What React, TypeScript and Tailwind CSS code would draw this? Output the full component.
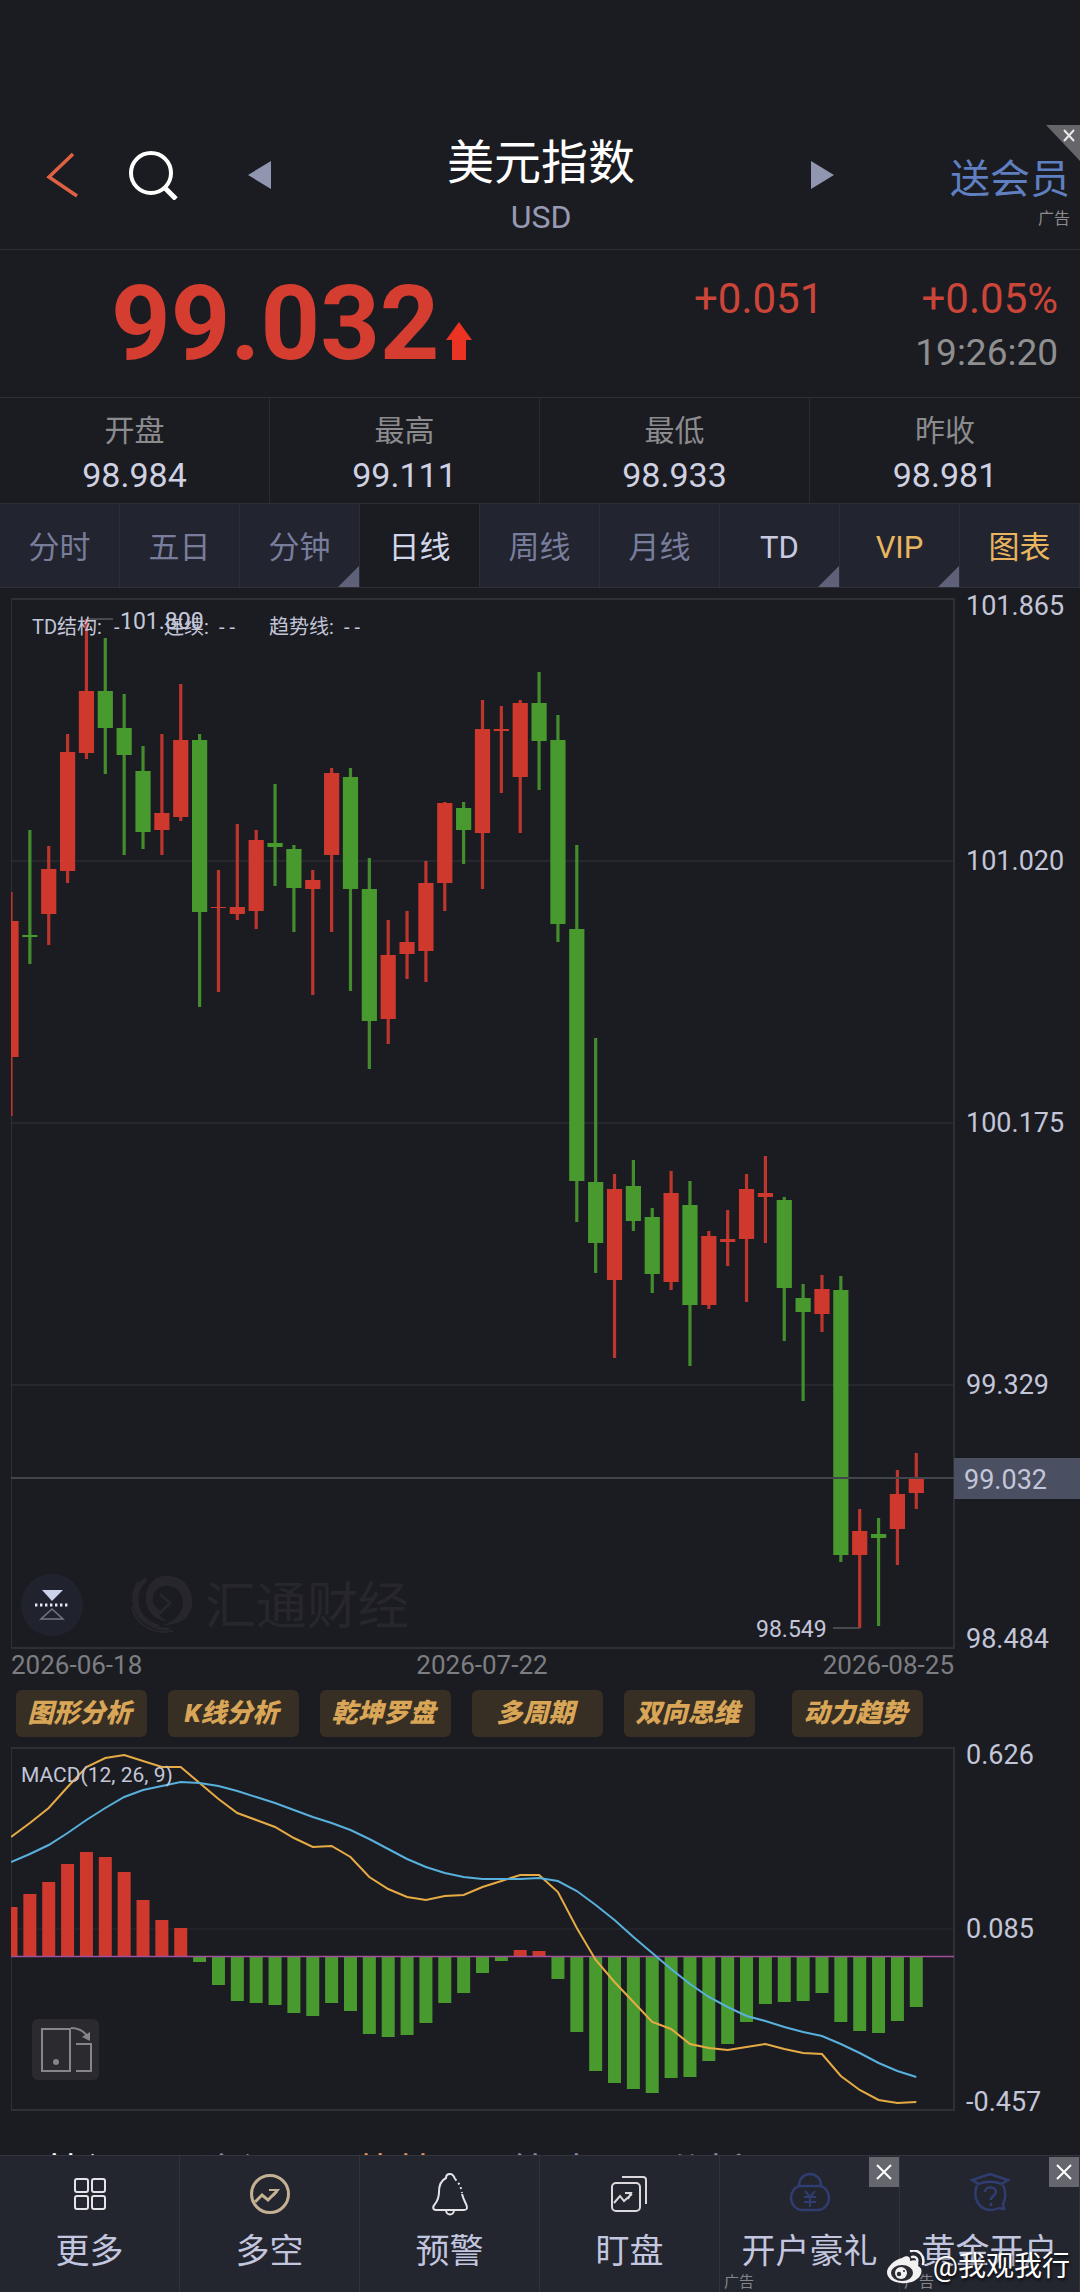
import React, { useState } from 'react';

type Candle = {
    up: boolean;
    high: number;
    top: number;
    bottom: number;
    low: number;
}

const RED = '#cf382d';
const GREEN = '#489a2f';
const STEP = 18.86;

// r = up, g = down, then high / body top / body bottom / low inside the plot
const rawCandles: [string, number, number, number, number][] = [
    ['r', 293, 322, 458, 517],
    ['g', 231, 336, 338, 365],
    ['r', 247, 270, 315, 346],
    ['r', 135, 153, 272, 284],
    ['r', 20, 92, 154, 160],
    ['g', 39, 92, 129, 175],
    ['g', 95, 129, 156, 256],
    ['g', 147, 172, 233, 250],
    ['r', 135, 214, 231, 256],
    ['r', 85, 141, 218, 222],
    ['g', 135, 141, 313, 408],
    ['r', 271, 308, 309, 393],
    ['r', 225, 308, 315, 321],
    ['r', 231, 241, 312, 330],
    ['g', 185, 244, 248, 287],
    ['g', 246, 250, 289, 333],
    ['r', 271, 281, 290, 396],
    ['r', 169, 174, 256, 333],
    ['g', 169, 178, 290, 392],
    ['g', 259, 290, 422, 470],
    ['r', 321, 356, 420, 445],
    ['r', 312, 343, 355, 380],
    ['r', 262, 284, 352, 383],
    ['r', 203, 204, 284, 312],
    ['g', 203, 209, 231, 265],
    ['r', 101, 130, 234, 290],
    ['r', 107, 130, 132, 194],
    ['r', 101, 104, 178, 234],
    ['g', 73, 104, 142, 191],
    ['g', 116, 141, 325, 343],
    ['g', 246, 330, 582, 623],
    ['g', 439, 583, 644, 674],
    ['r', 575, 590, 681, 759],
    ['g', 561, 587, 622, 632],
    ['g', 609, 618, 675, 694],
    ['r', 572, 594, 683, 691],
    ['g', 582, 606, 706, 767],
    ['r', 632, 637, 706, 710],
    ['r', 611, 640, 643, 667],
    ['r', 575, 590, 640, 703],
    ['r', 557, 594, 598, 644],
    ['g', 598, 601, 689, 742],
    ['g', 685, 699, 713, 802],
    ['r', 676, 690, 715, 733],
    ['g', 677, 691, 956, 963],
    ['r', 910, 932, 956, 1029],
    ['g', 919, 935, 939, 1027],
    ['r', 871, 895, 930, 966],
    ['r', 854, 879, 894, 910],
];

const candles: Candle[] = rawCandles.map(([c, high, top, bottom, low]) => ({ up: c === 'r', high, top, bottom, low }));

const ZERO = 209;
const bars = [
    159, 146, 134, 116, 104, 109, 124, 152, 172, 180, 214, 237, 253, 255, 257, 265, 268, 255, 263, 286, 289, 287, 275, 255, 245,
    225, 213, 202, 203, 231, 284, 323, 335, 341, 345, 330, 329, 313, 296, 274, 256, 254, 253, 245, 274, 283, 285, 273, 259,
];
const dif = [
    89, 75, 60, 39, 19, 10, 7, 13, 19, 19, 35, 51, 65, 72, 79, 90, 99, 98, 109, 129, 141, 149, 152, 148, 147,
    139, 133, 127, 127, 144, 180, 212, 234, 254, 274, 281, 296, 300, 302, 299, 296, 301, 305, 306, 328, 342, 352, 355, 354,
];
const dea = [
    114, 106, 97, 85, 72, 60, 49, 42, 38, 34, 35, 38, 43, 49, 55, 62, 69, 75, 82, 91, 101, 111, 119, 125, 129,
    131, 131, 131, 130, 133, 143, 157, 172, 189, 205, 221, 236, 249, 259, 268, 273, 279, 284, 288, 296, 305, 315, 323, 329,
];

const toPoints = (values: number[]) => values.map((v, i) => `${(i * STEP).toFixed(1)},${v}`).join(' ');

const stats = [
    { nome: '开盘', valor: '98.984' },
    { nome: '最高', valor: '99.111' },
    { nome: '最低', valor: '98.933' },
    { nome: '昨收', valor: '98.981' },
];

const periods = [
    { nome: '分时', color: 'text-[#787d9c]', menu: false },
    { nome: '五日', color: 'text-[#787d9c]', menu: false },
    { nome: '分钟', color: 'text-[#787d9c]', menu: true },
    { nome: '日线', color: 'text-[#787d9c]', menu: false },
    { nome: '周线', color: 'text-[#787d9c]', menu: false },
    { nome: '月线', color: 'text-[#787d9c]', menu: false },
    { nome: 'TD', color: 'text-[#c8cbe0]', menu: true },
    { nome: 'VIP', color: 'text-[#e9b55f]', menu: true },
    { nome: '图表', color: 'text-[#e9b55f]', menu: false },
];

const tools = ['图形分析', 'K线分析', '乾坤罗盘', '多周期', '双向思维', '动力趋势'];

function Header() {
    return (
        <header className="grid grid-cols-[1fr_588px_1fr] items-start border-b border-[#2f3036] pt-[135px] h-[250px]">
            <div className="flex items-center h-20 pl-[46px]">
                <button aria-label="返回">
                    <svg width="32" height="46" viewBox="0 0 32 46" fill="none" stroke="#df6144" strokeWidth="3.5">
                        <path d="M27 2 3 25 31 44" />
                    </svg>
                </button>
                <button aria-label="搜索" className="ml-[51px]">
                    <svg width="50" height="50" viewBox="0 0 50 50" fill="none" stroke="#fff" strokeWidth="4">
                        <circle cx="22" cy="23" r="20" />
                        <path d="M35 37 47 49" strokeWidth="5" />
                    </svg>
                </button>
            </div>
            <div className="flex items-start justify-between">
                <button aria-label="上一个" className="flex items-center h-20 pl-0.5">
                    <svg width="23" height="28" viewBox="0 0 23 28" fill="#9196b0"><path d="M23 0v28L0 14z" /></svg>
                </button>
                <div className="text-center">
                    <h1 className="text-[47px] leading-[56px] text-white">美元指数</h1>
                    <p className="mt-1.5 text-[32px] leading-10 text-[#979ab2]">USD</p>
                </div>
                <button aria-label="下一个" className="flex items-center h-20">
                    <svg width="23" height="28" viewBox="0 0 23 28" fill="#9196b0"><path d="M0 0v28l23-14z" /></svg>
                </button>
            </div>
            <div className="relative flex flex-col items-end pr-2.5 pt-[18px]">
                <a href="#vip" className="text-[40px] leading-[54px] whitespace-nowrap text-[#5f7fc0]">送会员</a>
                <span className="text-base leading-6 text-[#8b8b8f]">广告</span>
                <button aria-label="关闭广告" className="absolute right-0 -top-2.5">
                    <svg width="34" height="36" viewBox="0 0 34 36">
                        <path d="M0 0h34v36z" fill="#66666a" />
                        <path d="m18 5 10 11M28 5 18 16" stroke="#e8e8e8" strokeWidth="2" />
                    </svg>
                </button>
            </div>
        </header>
    )
}

function Quote() {
    return (
        <section className="flex items-center justify-between h-[148px] border-b border-[#2f3036] pl-[111px] pr-[22px]">
            <div className="flex items-end">
                <strong className="text-[104px] leading-[112px] font-bold text-[#d63d31]">99.032</strong>
                <svg className="mb-5 ml-1.5" width="26" height="38" viewBox="0 0 26 38" fill="#ea3323">
                    <path d="M13 0 26 18h-6v20H6V18H0z" />
                </svg>
            </div>
            <div className="grid grid-cols-[auto_auto] gap-x-[92px] pt-1 text-right text-[42px] leading-[54px] text-[#cb4538]">
                <span>+0.051</span>
                <span>+0.05%</span>
                <time className="col-start-2 text-[37px] text-[#8f8f90]">19:26:20</time>
            </div>
        </section>
    )
}

function PriceChart() {
    return (
        <section className="relative pl-[11px]">
            <svg className="block w-full" viewBox="0 0 1069 1091" fontFamily='Roboto, "Noto Sans CJK SC", sans-serif'>
                <clipPath id="plot"><rect width="944" height="1049" /></clipPath>
                <g transform="translate(0 11)">
                    {[262, 524, 786].map((y) => (
                        <path key={y} d={`M0 ${y}H943`} stroke="#27282d" strokeWidth="2" />
                    ))}
                    <rect width="943" height="1049" fill="none" stroke="#2f3037" strokeWidth="2" />

                    {/* watermark */}
                    <path
                        fill="#27262c"
                        d="M152 977c20-2 31 13 29 29-2 14-13 20-29 20 12-4 20-12 20-22 0-12-9-18-18-17-10 1-13 9-12 17s8 14 14 18c-10 0-20-8-21-20-1-12 5-23 17-25z"
                    />
                    <g fill="none" stroke="#27262c" strokeLinecap="round">
                        <path d="M134 981c-14 13-12 38 12 46" strokeWidth="4" />
                        <path d="M127 984c-12 20 2 46 30 46" strokeWidth="3" />
                        <path d="M121 1008c4 18 22 28 40 24" strokeWidth="2" />
                        <path d="m150 996 9 8-10 10-9-9" strokeWidth="3" />
                    </g>
                    <text x="194" y="1025" fontSize="51" fill="#27262c">汇通财经</text>

                    <g clipPath="url(#plot)">
                        {candles.map((c, i) => {
                            const x = i * STEP;
                            const color = c.up ? RED : GREEN;
                            return (
                                <g key={i} fill={color}>
                                    <rect x={x - 1.6} y={c.high} width="3.2" height={c.low - c.high} opacity="0.9" />
                                    <rect x={x - 7.6} y={c.top} width="15.2" height={c.bottom - c.top} />
                                </g>
                            )
                        })}
                    </g>
                    <path d="M0 879H943" stroke="#43454d" strokeWidth="2" />

                    <path d="M77 20h25M822 1029h27" stroke="#57585d" strokeWidth="1.5" />
                    <g fill="#c3c6d9" fontSize="20">
                        <text x="21" y="35">TD结构:</text>
                        <text x="103" y="35">- -</text>
                        <text x="153" y="35">连续:</text>
                        <text x="208" y="35">- -</text>
                        <text x="258" y="35">趋势线:</text>
                        <text x="333" y="35">- -</text>
                    </g>
                    <g fill="#c3c6d9" fontSize="23">
                        <text x="109" y="30">101.800</text>
                        <text x="745" y="1038">98.549</text>
                    </g>

                    <rect x="943" y="859" width="126" height="41" fill="#4b4f62" />
                    <g fill="#c3c6d9" fontSize="27">
                        <text x="955" y="16">101.865</text>
                        <text x="955" y="271">101.020</text>
                        <text x="955" y="533">100.175</text>
                        <text x="955" y="795">99.329</text>
                        <text x="953" y="890">99.032</text>
                        <text x="955" y="1049">98.484</text>
                    </g>
                    <g fill="#7d7e82" fontSize="26">
                        <text x="0" y="1075">2026-06-18</text>
                        <text x="471" y="1075" textAnchor="middle">2026-07-22</text>
                        <text x="943" y="1075" textAnchor="end">2026-08-25</text>
                    </g>
                </g>
            </svg>
            <button aria-label="收起" className="absolute left-[21px] bottom-[43px] flex items-center justify-center w-[62px] h-[62px] rounded-full bg-[#20232e]">
                <svg width="36" height="32" viewBox="0 0 36 32" fill="none">
                    <path d="M8 1h21L18 12z" fill="#cdd2ec" />
                    <path d="M1 16h34" stroke="#e6e8f5" strokeWidth="3" strokeDasharray="2.4 2.6" />
                    <path d="M18 20 29 30H7z" stroke="#75777f" strokeWidth="1.5" />
                </svg>
            </button>
        </section>
    )
}

function MacdChart() {
    return (
        <section className="relative pl-[11px] mt-[3px]">
            <svg className="block w-full" viewBox="0 0 1069 374" fontFamily='Roboto, "Noto Sans CJK SC", sans-serif'>
                <clipPath id="macd"><rect width="944" height="362" /></clipPath>
                <g transform="translate(0 8)">
                    <path d="M0 181H943" stroke="#222328" strokeWidth="2" />
                    <rect width="943" height="362" fill="none" stroke="#2f3037" strokeWidth="2" />
                    <g clipPath="url(#macd)">
                        {bars.map((v, i) => (
                            <rect
                                key={i}
                                x={i * STEP - 6.5}
                                y={Math.min(v, ZERO)}
                                width="13"
                                height={Math.abs(v - ZERO)}
                                fill={v < ZERO ? RED : GREEN}
                            />
                        ))}
                    </g>
                    <path d="M0 208.5H943" stroke="#a3509a" strokeWidth="1.5" />
                    <polyline points={toPoints(dif)} fill="none" stroke="#e6ab45" strokeWidth="2" />
                    <polyline points={toPoints(dea)} fill="none" stroke="#58b0dc" strokeWidth="2" />
                    <text x="10" y="34" fontSize="21" fill="#c3c6d9">MACD(12, 26, 9)</text>
                    <g fill="#c3c6d9" fontSize="27">
                        <text x="955" y="16">0.626</text>
                        <text x="955" y="190">0.085</text>
                        <text x="955" y="363">-0.457</text>
                    </g>
                </g>
            </svg>
            <button aria-label="横屏" className="absolute left-8 bottom-[34px] flex items-center justify-center w-[67px] h-[61px] rounded-md bg-[#2b2a2f]">
                <svg width="52" height="48" viewBox="0 0 52 48" fill="none" stroke="#85868b" strokeWidth="2">
                    <rect x="2" y="3" width="28" height="42" />
                    <circle cx="16" cy="36" r="3" fill="#85868b" stroke="none" />
                    <path d="M36 18h15v27H36" />
                    <path d="M31 2c7 0 13 3 17 9" />
                    <path d="m42 11 8-5v9z" fill="#85868b" stroke="none" />
                </svg>
            </button>
        </section>
    )
}

function CloseAd() {
    return (
        <button aria-label="关闭广告" className="absolute top-px right-0 flex items-center justify-center w-[30px] h-[30px] bg-[#66676e]">
            <svg width="16" height="16" viewBox="0 0 16 16" stroke="#fff" strokeWidth="2"><path d="m1 1 14 14M15 1 1 15" /></svg>
        </button>
    )
}

const navItems = [
    {
        nome: '更多',
        ad: false,
        icon: (
            <g stroke="#e4e4e8" strokeWidth="2">
                <rect x="7" y="7" width="13" height="13" rx="2" />
                <rect x="24" y="7" width="13" height="13" rx="2" />
                <rect x="7" y="24" width="13" height="13" rx="2" />
                <rect x="24" y="24" width="13" height="13" rx="2" />
            </g>
        ),
    },
    {
        nome: '多空',
        ad: false,
        icon: (
            <g stroke="#c4b193" strokeWidth="3">
                <circle cx="22" cy="22" r="18.5" />
                <path d="m7 30 7-7 6 5 9-9" />
                <path d="M21 18h9l-5 6" strokeWidth="2" />
            </g>
        ),
    },
    {
        nome: '预警',
        ad: false,
        icon: (
            <g stroke="#e4e4e8" strokeWidth="2">
                <path d="M27 7c-1-3-2-5-5-5s-4 2-4 4c-6 3-7 8-7 14 0 5-1 8-4 12-3 3-2 6 1 6h28c3 0 4-2 2-6-2-4-3-6-4-10" />
                <path d="M27 7c4 4 6 8 7 14" strokeDasharray="2 3" />
                <path d="M18 38c0 6 8 6 8 0" />
            </g>
        ),
    },
    {
        nome: '盯盘',
        ad: false,
        icon: (
            <g stroke="#dcd9dc" strokeWidth="2">
                <rect x="4" y="11" width="28" height="28" rx="4" />
                <path d="M14 5h21c2 0 3 1 3 3v24" />
                <path d="m6 31 6-7 4 5 8-7M17 21h6l-3 6" />
            </g>
        ),
    },
    {
        nome: '开户豪礼',
        ad: true,
        icon: (
            <g stroke="#303d70" strokeWidth="2.5">
                <path d="M11 14c0-16 22-16 22 0" />
                <path d="M13 14h18c6 0 10 6 10 12s-5 12-11 12H14C8 38 3 32 3 26s4-12 10-12z" />
                <path d="m17 19 5 6 5-6M16 25h12M16 30h12M22 25v10" strokeWidth="2" />
            </g>
        ),
    },
    {
        nome: '黄金开户',
        ad: true,
        icon: (
            <g stroke="#303d70" strokeWidth="2.5">
                <path d="M22 2 40 8 33 12C27 9 17 9 11 12L4 8z" />
                <path d="M9 13c-5 13 2 25 14 25 4 0 6-1 8-2l5 1-1-5c3-5 3-13 0-19" />
                <path d="M17 20c0-6 11-6 11 0 0 4-5 3-5 8M23 31v3" />
            </g>
        ),
    },
];

function BottomNav() {
    return (
        <nav className="relative grid grid-cols-6 h-[137px] shrink-0 border-t border-[#33343d] bg-[#23252f]">
            {navItems.map((item) => (
                <div key={item.nome} className="relative border-r border-[#31323b]">
                    <a href="#nav" className="flex flex-col items-center pt-4">
                        <svg width="44" height="44" viewBox="0 0 44 44" fill="none">{item.icon}</svg>
                        <span className="mt-2.5 text-[34px] leading-[50px] whitespace-nowrap text-[#c3c6df]">{item.nome}</span>
                    </a>
                    {item.ad && <CloseAd />}
                    {item.ad && <span className="absolute left-1 bottom-0 text-[15px] leading-5 text-[#85868c]">广告</span>}
                </div>
            ))}
            <div className="absolute right-[10px] bottom-1 flex items-center gap-2 text-[28px] leading-[42px] text-white [text-shadow:1px_2px_3px_rgba(0,0,0,0.7)]">
                <svg width="38" height="34" viewBox="0 0 38 34">
                    <path d="M15 8c4-3 9-2 8 3 5-2 10 0 8 5 4 2 4 5 3 8-3 7-12 10-20 9C5 32 0 28 0 22 0 17 8 9 15 8z" fill="#f1f1f1" />
                    <ellipse cx="15" cy="23" rx="11" ry="8" fill="#2a2b33" />
                    <circle cx="14" cy="23" r="6" fill="#f1f1f1" />
                    <circle cx="12" cy="24" r="2.2" fill="#2a2b33" />
                    <circle cx="17" cy="21" r="1" fill="#2a2b33" />
                    <path d="M24 1c8-2 14 5 12 13M25 7c4-1 6 2 5 5" fill="none" stroke="#f1f1f1" strokeWidth="2.5" strokeLinecap="round" />
                </svg>
                <span>@我观我行</span>
            </div>
        </nav>
    )
}

export default function App() {
    const [active, setActive] = useState('日线');

    return (
        <div className="flex flex-col h-screen bg-[#1b1c21] font-[Roboto,'Noto_Sans_CJK_SC',sans-serif]">
            <main className="flex-1 min-h-0 overflow-x-hidden overflow-y-auto [scrollbar-width:none]">
                <Header />
                <Quote />

                <dl className="grid grid-cols-4 h-[105px] text-center">
                    {stats.map((s) => (
                        <div key={s.nome} className="pt-2.5 border-r border-[#2a2b31] last:border-r-0">
                            <dt className="text-[30px] leading-[45px] text-[#8b8b8e]">{s.nome}</dt>
                            <dd className="text-[34px] leading-[45px] text-[#cfd1e2]">{s.valor}</dd>
                        </div>
                    ))}
                </dl>

                <div role="tablist" className="grid grid-cols-9 h-[85px] border-y border-[#2d2e37]">
                    {periods.map((p) => (
                        <button
                            key={p.nome}
                            role="tab"
                            aria-selected={active === p.nome}
                            onClick={() => setActive(p.nome)}
                            className={`relative border-r border-[#2d2e37] pt-1.5 text-[31px] ${active === p.nome ? 'bg-[#1b1c21] text-[#d3d6e8]' : `bg-[#22242f] ${p.color}`}`}
                        >
                            {p.nome}
                            {p.menu && (
                                <svg className="absolute right-0 bottom-0" width="21" height="21" viewBox="0 0 21 21" fill="#5e6178">
                                    <path d="M21 0v21H0z" />
                                </svg>
                            )}
                        </button>
                    ))}
                </div>

                <PriceChart />

                <div className="flex gap-[21px] mt-[11px] pl-4">
                    {tools.map((t) => (
                        <button key={t} className="w-[131px] h-[47px] rounded-md bg-[#372e24] pr-1 text-[26px] font-black italic whitespace-nowrap text-[#d9a658] last:ml-4">
                            {t}
                        </button>
                    ))}
                </div>

                <MacdChart />

                <div className="flex gap-[75px] mt-9 pl-[46px] pb-5 text-[40px] leading-[48px] whitespace-nowrap text-[#8a8da6]">
                    <a href="#news" className="text-white">快讯</a>
                    <a href="#info">资讯</a>
                    <a href="#hot" className="text-[#e39a63]">热帖</a>
                    <a href="#plan">策略</a>
                    <a href="#analysis">分析</a>
                </div>
            </main>
            <BottomNav />
        </div>
    )
}
